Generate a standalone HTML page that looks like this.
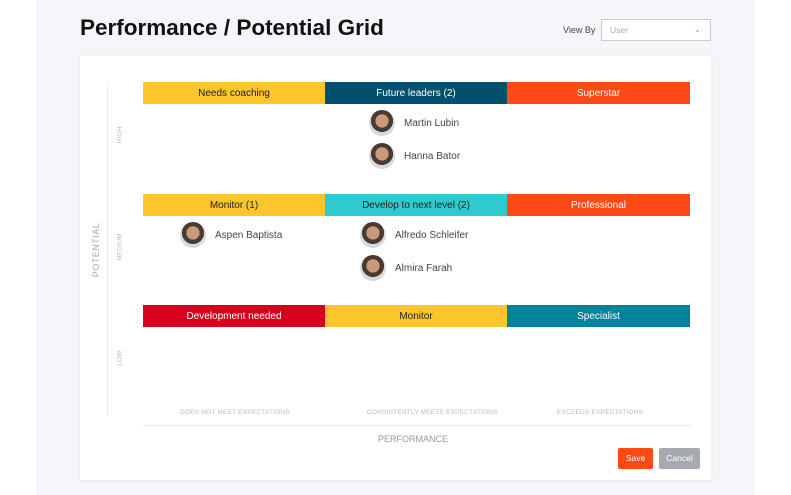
<!DOCTYPE html>
<html><head><style>
*{margin:0;padding:0;box-sizing:border-box}
body{width:791px;height:495px;background:#fff;font-family:"Liberation Sans",sans-serif;position:relative;overflow:hidden}
.bg{position:absolute;left:36px;top:0;width:719px;height:495px;background:#f4f6f9}
.a{position:absolute}
h1{position:absolute;left:80px;top:15px;font-size:22.5px;font-weight:bold;color:#111;letter-spacing:0}
.card{position:absolute;left:80px;top:56px;width:631px;height:424px;background:#fff;box-shadow:0 1px 3px rgba(0,0,0,.08)}
.bar{position:absolute;height:22px;font-size:10px;line-height:23px;text-align:center;width:182px}
.av{position:absolute;width:26px;height:26px;border-radius:50%;background:radial-gradient(circle at 50% 42%,#c99b7c 0 33%,#4a3a30 34% 55%,#d5dade 56%)}
.nm{position:absolute;font-size:10px;color:#444}
.sm{position:absolute;font-size:6.5px;color:#bbb;letter-spacing:.2px}
</style></head><body>
<div class="bg"></div>
<h1>Performance / Potential Grid</h1>
<div class="a" style="left:563px;top:25px;font-size:9px;color:#444">View By</div>
<div class="a" style="left:601px;top:19px;width:110px;height:22px;border:1px solid #ccc;background:#fff;font-size:8.5px;color:#aaa;padding:5px 8px">User<span style="position:absolute;right:9px;top:4px;color:#999">⌄</span></div>
<div class="card"></div>
<div class="a" style="left:107px;top:82px;width:1px;height:334px;background:#eee"></div>
<div class="bar" style="left:143px;top:82px;background:#fdc52c;color:#222">Needs coaching</div>
<div class="bar" style="left:325px;top:82px;background:#00506e;color:#fff">Future leaders (2)</div>
<div class="bar" style="left:507px;top:82px;width:183px;background:#fd4916;color:#fff">Superstar</div>
<div class="bar" style="left:143px;top:194px;background:#fdc52c;color:#222">Monitor (1)</div>
<div class="bar" style="left:325px;top:194px;background:#2fcacf;color:#222">Develop to next level (2)</div>
<div class="bar" style="left:507px;top:194px;width:183px;background:#fd4916;color:#fff">Professional</div>
<div class="bar" style="left:143px;top:305px;background:#d9001e;color:#fff">Development needed</div>
<div class="bar" style="left:325px;top:305px;background:#fdc52c;color:#222">Monitor</div>
<div class="bar" style="left:507px;top:305px;width:183px;background:#00849a;color:#fff">Specialist</div>
<div class="av" style="left:369px;top:110px"></div><div class="nm" style="left:404px;top:118px">Martin Lubin</div>
<div class="av" style="left:369px;top:143px"></div><div class="nm" style="left:404px;top:151px">Hanna Bator</div>
<div class="av" style="left:180px;top:222px"></div><div class="nm" style="left:215px;top:230px">Aspen Baptista</div>
<div class="av" style="left:360px;top:222px"></div><div class="nm" style="left:395px;top:230px">Alfredo Schleifer</div>
<div class="av" style="left:360px;top:255px"></div><div class="nm" style="left:395px;top:263px">Almira Farah</div>
<div class="a" style="left:96px;top:250px;transform:translate(-50%,-50%) rotate(-90deg);font-size:9px;color:#aaa;letter-spacing:.5px">POTENTIAL</div>
<div class="sm" style="left:120px;top:135px;transform:translate(-50%,-50%) rotate(-90deg)">HIGH</div>
<div class="sm" style="left:120px;top:247px;transform:translate(-50%,-50%) rotate(-90deg)">MEDIUM</div>
<div class="sm" style="left:120px;top:358px;transform:translate(-50%,-50%) rotate(-90deg)">LOW</div>
<div class="sm" style="left:180px;top:409px">DOES NOT MEET EXPECTATIONS</div>
<div class="sm" style="left:367px;top:409px">CONSISTENTLY MEETS EXPECTATIONS</div>
<div class="sm" style="left:557px;top:409px">EXCEEDS EXPECTATIONS</div>
<div class="a" style="left:143px;top:425px;width:547px;height:1px;background:#e6e6e6"></div>
<div class="a" style="left:378px;top:434px;font-size:9px;color:#999">PERFORMANCE</div>
<div class="a" style="left:618px;top:448px;width:35px;height:21px;background:#fd4916;color:#fff;font-size:8.5px;line-height:21px;text-align:center;border-radius:2px">Save</div>
<div class="a" style="left:659px;top:448px;width:41px;height:21px;background:#a5a9b0;color:#fff;font-size:8.5px;line-height:21px;text-align:center;border-radius:2px">Cancel</div>
</body></html>
